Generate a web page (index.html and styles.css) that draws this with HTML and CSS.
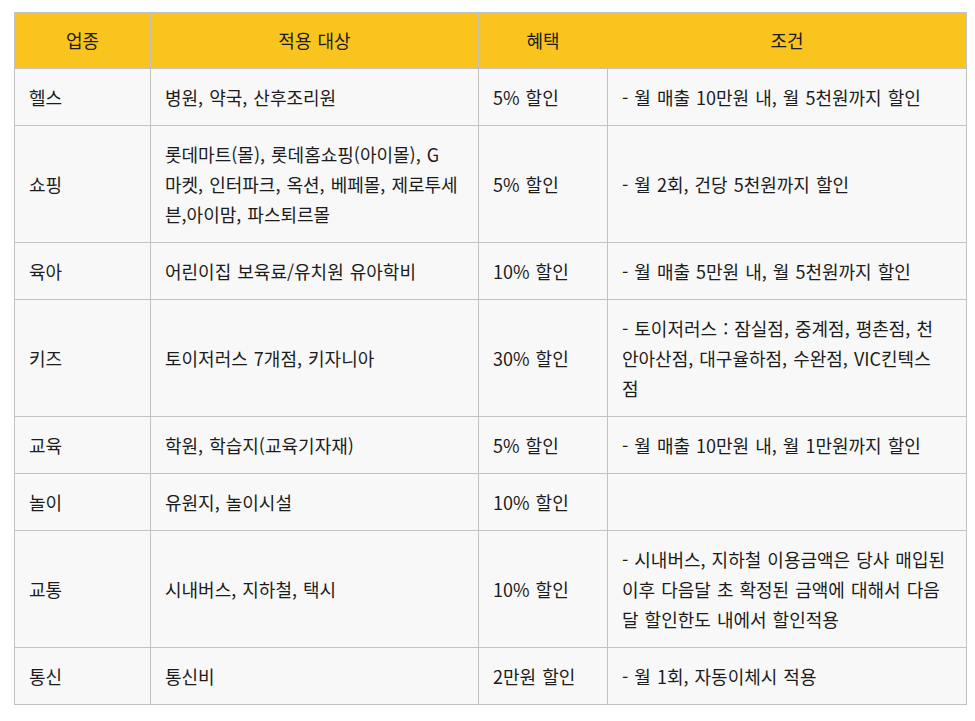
FILE: index.html
```html
<!DOCTYPE html>
<html lang="ko">
<head>
<meta charset="utf-8">
<link rel="stylesheet" href="styles.css">
</head>
<body>
<table class="benefits">
  <colgroup>
    <col class="c1"><col class="c2"><col class="c3"><col class="c4">
  </colgroup>
  <thead>
    <tr><th>업종</th><th>적용 대상</th><th>혜택</th><th>조건</th></tr>
  </thead>
  <tbody>
    <tr><td>헬스</td><td>병원, 약국, 산후조리원</td><td>5% 할인</td><td>- 월 매출 10만원 내, 월 5천원까지 할인</td></tr>
    <tr><td>쇼핑</td><td>롯데마트(몰), 롯데홈쇼핑(아이몰), G<br>마켓, 인터파크, 옥션, 베페몰, 제로투세<br>븐,아이맘, 파스퇴르몰</td><td>5% 할인</td><td>- 월 2회, 건당 5천원까지 할인</td></tr>
    <tr><td>육아</td><td>어린이집 보육료/유치원 유아학비</td><td>10% 할인</td><td>- 월 매출 5만원 내, 월 5천원까지 할인</td></tr>
    <tr><td>키즈</td><td>토이저러스 7개점, 키자니아</td><td>30% 할인</td><td>- 토이저러스 : 잠실점, 중계점, 평촌점, 천<br>안아산점, 대구율하점, 수완점, VIC킨텍스<br>점</td></tr>
    <tr><td>교육</td><td>학원, 학습지(교육기자재)</td><td>5% 할인</td><td>- 월 매출 10만원 내, 월 1만원까지 할인</td></tr>
    <tr><td>놀이</td><td>유원지, 놀이시설</td><td>10% 할인</td><td></td></tr>
    <tr><td>교통</td><td>시내버스, 지하철, 택시</td><td>10% 할인</td><td>- 시내버스, 지하철 이용금액은 당사 매입된<br>이후 다음달 초 확정된 금액에 대해서 다음<br>달 할인한도 내에서 할인적용</td></tr>
    <tr><td>통신</td><td>통신비</td><td>2만원 할인</td><td>- 월 1회, 자동이체시 적용</td></tr>
  </tbody>
</table>
</body>
</html>
```
FILE: styles.css
```css
html, body {
  margin: 0;
  padding: 0;
  background: #ffffff;
}
body {
  padding: 12px 0 0 14px;
  font-family: "Noto Sans CJK KR", sans-serif;
  font-size: 18px;
  word-spacing: 1px;
  color: #1c1c1c;
}
.benefits {
  border-collapse: collapse;
  table-layout: fixed;
  width: 952px;
}
.c1 { width: 136px; }
.c2 { width: 328px; }
.c3 { width: 129px; }
.c4 { width: 359px; }
.benefits th,
.benefits td {
  border: 1px solid #c2c2c2;
  line-height: 30px;
  padding: 13px 12px 13px 14px;
  vertical-align: middle;
  word-break: break-all;
}
.benefits th {
  background: #f9c41d;
  font-weight: 400;
  text-align: center;
  padding: 12px 14px 13px;
}
.benefits td {
  background: #f8f8f8;
  text-align: left;
}
```
